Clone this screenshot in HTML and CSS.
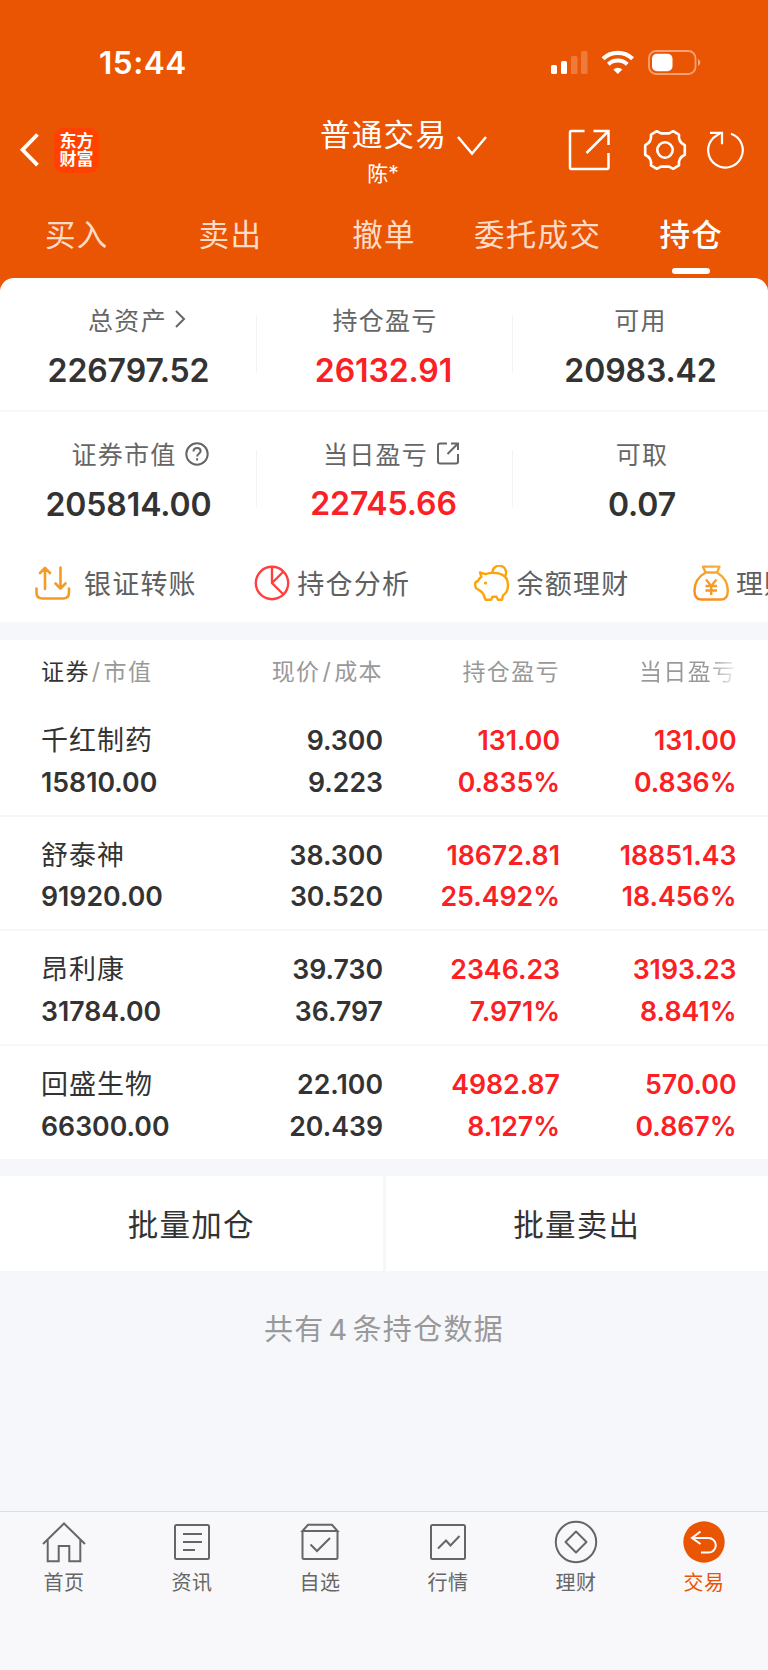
FILE: index.html
```html
<!DOCTYPE html>
<html lang="zh-CN">
<head>
<meta charset="utf-8">
<title>持仓</title>
<link rel="stylesheet" href="styles.css">
</head>
<body>
<div class="app">
  <header class="top">
    <div class="status">
      <span class="time">15:44</span>
      <svg class="status-icons" width="152" height="28" viewBox="0 0 152 28">
        <g fill="#fff">
          <rect x="1" y="17" width="6" height="9" rx="1.5"/>
          <rect x="11" y="13" width="6" height="13" rx="1.5"/>
          <rect x="21" y="8" width="6.5" height="18" rx="1.5" opacity=".22"/>
          <rect x="31" y="3" width="6.5" height="23" rx="1.5" opacity=".22"/>
        </g>
        <g fill="none" stroke="#fff">
          <path d="M53 10.7a21.5 21.5 0 0 1 29.6 0" stroke-width="4.2"/>
          <path d="M58.3 16.2a14 14 0 0 1 19 0" stroke-width="4"/>
        </g>
        <path d="M63.3 21.5a6.6 6.6 0 0 1 9 0L67.8 26z" fill="#fff"/>
        <rect x="99" y="3" width="46.5" height="23" rx="7" fill="none" stroke="#fff" stroke-width="1.8" opacity=".45"/>
        <rect x="102" y="5.800" width="20.500" height="17.500" rx="5" fill="#fff"/>
        <path d="M148 11v7c3-1.500 3-5.500 0-7z" fill="#fff" opacity=".5"/>
      </svg>
    </div>
    <div class="nav">
      <div class="nav-left">
        <svg width="22" height="36" viewBox="0 0 22 36"><path d="M18.500 2.500L3.500 17.800l15 15.300" fill="none" stroke="#fff" stroke-width="3.800"/></svg>
        <div class="logo"><span>东方</span><span>财富</span></div>
      </div>
      <div class="nav-title"><div class="title">普通交易</div><div class="subtitle">陈*</div></div>
      <svg class="caret" width="32" height="22" viewBox="0 0 32 22"><path d="M2 2l14 16.500L30 2" fill="none" stroke="#fff" stroke-width="2.500"/></svg>
      <div class="nav-right">
        <svg width="42" height="42" viewBox="0 0 42 42" fill="none" stroke="#fff" stroke-width="2.500"><path d="M16.500 2H3.500Q2 2 2 3.500v35Q2 40 3.500 40h35.500Q40.500 40 40.500 38.500V24M25.500 2h15v14M40.500 2L18.500 24"/></svg>
        <svg width="44" height="42" viewBox="0 0 44 42" fill="none" stroke="#fff" stroke-width="2.600" stroke-linejoin="round"><path d="M13.800 2.200L18 4.400H26L30.200 2.200L36 5.600Q35 13 41.800 16.200V25.800Q35 29 36 36.400L30.200 39.800 26 37.600H18L13.800 39.800 8 36.400Q9 29 2.200 25.800V16.200Q9 13 8 5.600Z"/><circle cx="22" cy="21" r="7.700"/></svg>
        <svg width="38" height="38" viewBox="0 0 38 38" fill="none" stroke="#fff" stroke-width="2.200"><path d="M24 2.800A17.300 17.300 0 1 1 6 7.200L13.500 1.800"/><path d="M3 1.800h12v11.500"/></svg>
      </div>
    </div>
    <nav class="tabs">
      <span>买入</span><span>卖出</span><span>撤单</span><span>委托成交</span><span class="on">持仓</span>
    </nav>
  </header>

  <section class="card">
    <div class="summary">
      <div class="cell"><div class="label">总资产<svg class="ic-go" width="12" height="20" viewBox="0 0 12 20"><path d="M2 2l8 8-8 8" fill="none" stroke="#666" stroke-width="2"/></svg></div><div class="num">226797.52</div></div>
      <div class="cell"><div class="label">持仓盈亏</div><div class="num red">26132.91</div></div>
      <div class="cell"><div class="label">可用</div><div class="num">20983.42</div></div>
    </div>
    <div class="summary second">
      <div class="cell"><div class="label">证券市值<svg class="ic-q" width="24" height="24" viewBox="0 0 24 24" fill="none" stroke="#666" stroke-width="2"><circle cx="12" cy="12" r="10.700"/><path d="M8.500 9.500c0-2.200 1.500-3.600 3.600-3.600s3.500 1.300 3.500 3.200c0 2.600-3.500 2.600-3.500 5.400M12.100 16.300v2.200"/></svg></div><div class="num">205814.00</div></div>
      <div class="cell"><div class="label">当日盈亏<svg class="ic-out" width="24" height="24" viewBox="0 0 24 24" fill="none" stroke="#666" stroke-width="2"><path d="M11 2.500H4Q2 2.500 2 4.500v16Q2 22.500 4 22.500h16Q22 22.500 22 20.500V13M15 2.500h7V9M22 2.500L11.500 13"/></svg></div><div class="num red">22745.66</div></div>
      <div class="cell"><div class="label">可取</div><div class="num">0.07</div></div>
    </div>
    <div class="actions">
      <div class="action a1">
        <svg width="36" height="36" viewBox="0 0 36 36" fill="none" stroke="#f59a23" stroke-width="2.600" stroke-linecap="round" stroke-linejoin="round"><path d="M1.500 23.500v4q0 6 6 6h20.500q6 0 6-6v-4M10 24V3M5 8l5-5 5 5M25.500 2.500v21M20.500 18.500l5 5 5-5"/></svg><span>银证转账</span></div>
      <div class="action a2">
        <svg width="36" height="36" viewBox="0 0 36 36" fill="none" stroke="#ff4040" stroke-width="2.400"><circle cx="18" cy="18" r="16.200"/><path d="M18 1.800V18l11.500 11.500M18 18L29.500 6.500"/></svg><span>持仓分析</span></div>
      <div class="action a3">
        <svg width="36" height="36" viewBox="0 0 36 36" fill="none" stroke="#fba50a" stroke-width="2.400" stroke-linejoin="round"><path d="M6 7.500L11.500 9.200Q17 7.200 24 8.200Q34 10.500 34 20Q34 27 29 30.500L28 34.700H24L22.500 31.800H18.500L17 34.700H11.500L9.500 29.500Q8.500 27.500 6.500 26L2.500 23.500Q1.200 22.500 1.200 20V18.500Q1.400 16.800 4 16Q5 13.500 7.400 11.800Z"/><path d="M18.500 7.500a6.800 6.800 0 1 1 12.500 3.700"/><circle cx="11.500" cy="18" r="1" fill="#fba50a" stroke-width="1.200"/></svg><span>余额理财</span></div>
      <div class="action a4">
        <svg width="36" height="36" viewBox="0 0 36 36" fill="none" stroke="url(#bag)" stroke-width="2.400" stroke-linejoin="round"><defs><linearGradient id="bag" gradientUnits="userSpaceOnUse" x1="30" y1="0" x2="8" y2="36"><stop offset="0" stop-color="#f8b03a"/><stop offset="1" stop-color="#f98a1a"/></linearGradient></defs><path d="M10 1.600h16.500L24 7.500H12.500zM12.500 7.500Q1.500 14 1.500 25.500Q1.500 34.500 8 34.500H28.500Q34.800 34.500 34.800 25.500Q34.800 14 24 7.500"/><path d="M13 14.500l5.200 6.500 5.200-6.500M18.200 21v9M12.500 21h11.500M12.500 25.500h11.500"/></svg><span>理财</span></div>
    </div>
  </section>

  <section class="holdings">
    <div class="row head"><div><b>证券</b><i>/</i>市值</div><div>现价<i>/</i>成本</div><div>持仓盈亏</div><div class="fade">当日盈亏</div></div>
    <div class="row"><div><p class="name">千红制药</p><p>15810.00</p></div><div><p>9.300</p><p>9.223</p></div><div class="red"><p>131.00</p><p>0.835%</p></div><div class="red"><p>131.00</p><p>0.836%</p></div></div>
    <div class="row"><div><p class="name">舒泰神</p><p>91920.00</p></div><div><p>38.300</p><p>30.520</p></div><div class="red"><p>18672.81</p><p>25.492%</p></div><div class="red"><p>18851.43</p><p>18.456%</p></div></div>
    <div class="row"><div><p class="name">昂利康</p><p>31784.00</p></div><div><p>39.730</p><p>36.797</p></div><div class="red"><p>2346.23</p><p>7.971%</p></div><div class="red"><p>3193.23</p><p>8.841%</p></div></div>
    <div class="row"><div><p class="name">回盛生物</p><p>66300.00</p></div><div><p>22.100</p><p>20.439</p></div><div class="red"><p>4982.87</p><p>8.127%</p></div><div class="red"><p>570.00</p><p>0.867%</p></div></div>
  </section>

  <div class="batch"><div>批量加仓</div><div>批量卖出</div></div>
  <div class="count">共有<em>4</em>条持仓数据</div>

  <footer class="bar">
    <div><svg viewBox="0 0 44 44"><path d="M1 24L22 3.500 43 24M5.700 20v21.300h11V26h10.600v15.300h11V20"/></svg>首页</div>
    <div><svg viewBox="0 0 44 44"><rect x="5" y="5" width="34" height="34" rx="1.500"/><path d="M13 14h19M13 22h19M13 30h12"/></svg>资讯</div>
    <div><svg viewBox="0 0 44 44"><path d="M4.500 11v26.500q0 1.500 1.500 1.500h32q1.500 0 1.500-1.500V11M4.500 11L10 4.800h24L39.500 11zM12.500 24.500l6.500 6.500L32 18"/></svg>自选</div>
    <div><svg viewBox="0 0 44 44"><rect x="5" y="5" width="34" height="34" rx="1.500"/><path d="M12 28.500l8-8 4.500 5L33.500 16"/></svg>行情</div>
    <div><svg viewBox="0 0 44 44"><circle cx="22" cy="22" r="20.200"/><path d="M22 11.500L32.500 22 22 32.500 11.500 22z" stroke-linejoin="round"/></svg>理财</div>
    <div class="on"><svg viewBox="0 0 44 44"><circle cx="22" cy="22" r="20.700" fill="#ea5504" stroke="none"/><path d="M18.500 11.500L10 18l8.500 6M10.500 18H26.500a7.300 7.300 0 0 1 0 14.600H19" stroke="#fff"/></svg>交易</div>
  </footer>
</div>
</body>
</html>
```
FILE: styles.css
```css
* { box-sizing: border-box; }
body { margin: 0; background: #f6f7fa; }
.app {
  width: 768px; height: 1670px; overflow: hidden;
  display: flex; flex-direction: column;
  font-family: Inter, "Noto Sans CJK SC", sans-serif;
  color: #333; background: #f6f7fa;
}
p { margin: 0; }
svg { display: block; flex: none; }
.red { color: #fa2023; }

.top { height: 290px; flex: none; background: #ea5504; color: #fff; }
.status { height: 100px; padding: 24px 66px 0 99px; display: flex; justify-content: space-between; align-items: center; }
.time { font-size: 31.500px; font-weight: 600; letter-spacing: 0.500px; }
.nav { height: 100px; display: flex; align-items: center; padding: 0 23px 0 19px; }
.nav-left { display: flex; align-items: center; gap: 13px; width: 301px; }
.logo {
  width: 45px; height: 45px; border-radius: 9px; background: #ff4200;
  display: flex; flex-direction: column; align-items: center; justify-content: center;
  font-size: 17px; line-height: 18.500px; font-weight: 700;
}
.nav-title { width: 126px; text-align: center; }
.title { font-size: 30.500px; line-height: 40px; letter-spacing: 1.300px; white-space: nowrap; margin-top: 7px; }
.subtitle { font-size: 21px; line-height: 38px; }
.caret { margin: -8px 0 0 10px; }
.nav-right { margin-left: auto; display: flex; align-items: center; }
.nav-right svg:nth-child(1) { margin-right: 33px; }
.nav-right svg:nth-child(2) { margin-right: 20px; }
.tabs { height: 78px; display: grid; grid-template-columns: repeat(5, 1fr); text-align: center; font-size: 30.500px; line-height: 70px; font-weight: 400; letter-spacing: 1.300px; white-space: nowrap; color: #ffdcc8; }
.tabs .on { color: #fff; font-weight: 500; }
.tabs .on::after { content: ""; display: block; width: 38px; height: 6px; border-radius: 3px; background: #fff; margin: -2px auto 0; }

.card { margin-top: -12px; height: 344px; flex: none; background: #fff; border-radius: 14px 14px 0 0; overflow: hidden; }
.summary { height: 134px; display: grid; grid-template-columns: 257px 256px 255px; border-bottom: 2px solid #f7f7f8; padding-top: 21px; }
.summary.second { height: 128px; border: 0; padding-top: 21px; }
.cell { text-align: center; background: linear-gradient(#f3f3f4, #f3f3f4) right 17px / 1px 57px no-repeat; }
.cell:last-child { background: none; }
.label { display: flex; justify-content: center; align-items: center; height: 40px; font-size: 25px; letter-spacing: 1.300px; color: #666; }
.cell:nth-child(1) .label { padding-left: 17px; }
.ic-go { margin-left: 7px; }
.ic-q, .ic-out { margin-left: 8px; }
.ic-q { margin-top: 1px; }
.second .cell:nth-child(2) .label { padding-left: 13px; }
.second .cell:nth-child(1) .label { padding-left: 23px; }
.second .cell:nth-child(3) .label { padding-left: 3px; }
.num { font-size: 32px; line-height: 40px; margin-top: 12px; font-weight: 600; letter-spacing: -0.1px; }
.cell:nth-child(2) .num { padding-right: 3px; }
.second .num { margin-top: 12px; }
.second .red { margin-top: 11px; }
.second .cell:last-child .num { padding-left: 3px; }
.actions { display: flex; height: 82px; padding-left: 35px; }
.action { flex: none; display: flex; align-items: center; width: 219.300px; height: 85px; font-size: 27px; letter-spacing: 1.200px; color: #606060; white-space: nowrap; }
.action svg { margin-right: 7px; }
.a1 svg { margin-right: 13px; }

.holdings { margin-top: 18px; flex: none; height: 521px; background: #fff; }
.row { height: 114.700px; display: grid; grid-template-columns: 200px 142px 177px 176.500px; padding: 18px 0 0 41px; border-bottom: 2px solid #f7f7f8; font-size: 26.700px; font-weight: 600; line-height: 41.500px; text-align: right; }
.row > div:first-child { text-align: left; }
.row .name { font-size: 27px; font-weight: 400; letter-spacing: 1px; color: #333; }
.row.head { height: 62px; padding-top: 12px; border: 0; font-size: 23px; font-weight: 400; letter-spacing: 1.400px; color: #999; }
.head b { font-weight: 400; color: #333; }
.head i { font-style: normal; margin: 0 2px; }
.head .fade { background: linear-gradient(90deg, #999 84%, #fff 102%); -webkit-background-clip: text; background-clip: text; color: transparent; }

.batch { display: grid; grid-template-columns: 1fr 1fr; gap: 3px; margin-top: 15px; height: 95px; flex: none; }
.batch div { background: #fff; text-align: center; font-size: 30.500px; letter-spacing: 1.300px; line-height: 97px; height: 95px; color: #333; }
.count { text-align: center; margin-top: 36px; height: 46px; line-height: 46px; font-size: 29px; letter-spacing: 1.300px; color: #999; }
.count em { font-style: normal; font-weight: 400; margin: 0 4px; }

.bar { margin-top: auto; height: 159px; flex: none; display: grid; grid-template-columns: repeat(6, 128px); border-top: 1px solid #dedee0; background: #f8f8fa; }
.bar div { display: flex; flex-direction: column; align-items: center; padding-top: 8px; font-size: 20px; line-height: 38px; letter-spacing: .6px; color: #666; }
.bar svg { width: 44px; height: 44px; fill: none; stroke: #666; stroke-width: 2; }
.bar .on { color: #ea5504; }
```
